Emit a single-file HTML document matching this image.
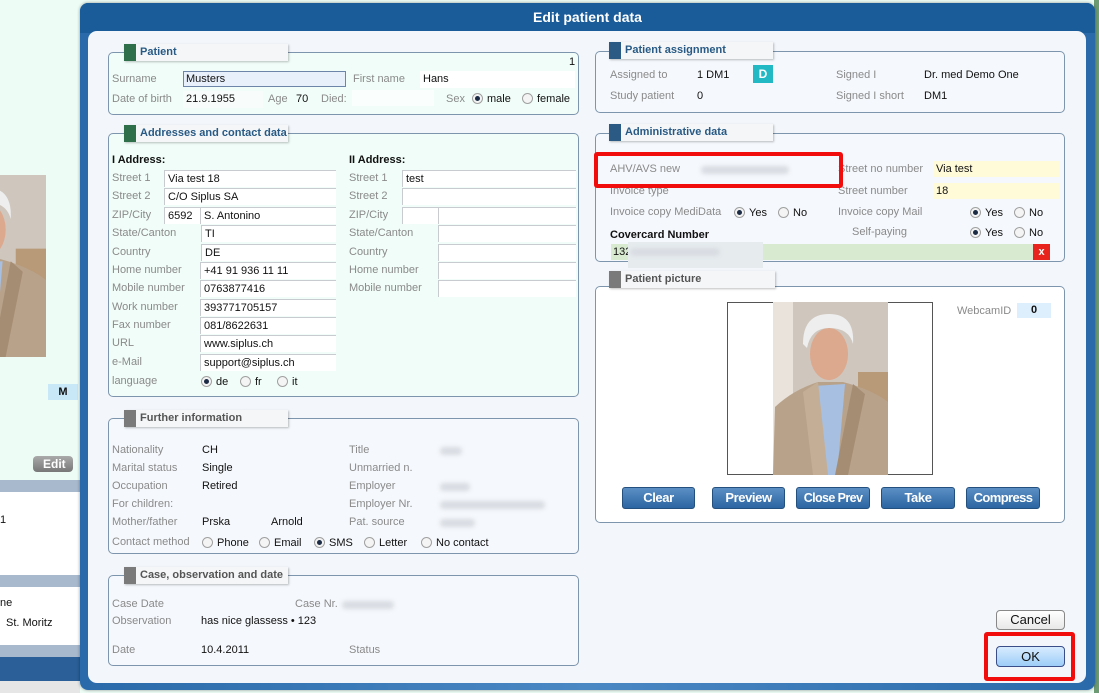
<!DOCTYPE html>
<html><head><meta charset="utf-8"><style>
*{box-sizing:border-box;margin:0;padding:0}
body{width:1099px;height:693px;overflow:hidden;background:#eefcf6;font-family:"Liberation Sans",sans-serif;font-size:11px;color:#111;position:relative}
.a{position:absolute;white-space:nowrap}
.l{position:absolute;color:#8a8a8a;white-space:nowrap;line-height:14px}
.v{position:absolute;color:#111;white-space:nowrap;line-height:14px}
.f{position:absolute;border-top:1px solid #c8ccd0;border-left:1px solid #c8ccd0;background:#fff;height:17px;padding-left:3px;line-height:16px;white-space:nowrap}
.grp{position:absolute;border:1px solid #7d95ad;border-radius:5px;background:#f1fdf8}
.grp.w{background:#f5f8fc}
.grp.wh{background:#fff}
.tab{position:absolute;height:17px;background:#f4f6f8;box-shadow:1px 1px 2px rgba(0,0,0,.25);font-weight:bold;font-size:11px;color:#285a85;line-height:17px;padding-left:16px}
.tab i{position:absolute;left:0;top:0;width:12px;height:17px}
.rd{display:inline-block;width:11px;height:11px;border:1px solid #a0a0a0;border-radius:50%;background:#f4f4f4;vertical-align:-2px;margin-right:4px;position:relative}
.rd.on::after{content:"";position:absolute;left:2px;top:2px;width:5px;height:5px;border-radius:50%;background:#1b2a45}
.btn{position:absolute;height:22px;border-radius:3px;background:linear-gradient(#5b8fc4,#2b65a2);border:1px solid #23507f;color:#fff;font-weight:bold;font-size:13px;letter-spacing:-0.4px;text-align:center;line-height:20px;box-shadow:0 0 0 1px #fff;overflow:hidden}
.blur{position:absolute;height:8px;border-radius:4px;background:#d8dce2;filter:blur(2px)}
</style></head><body>
<svg width="0" height="0" style="position:absolute"><defs>
<symbol id="ph" viewBox="0 0 115 173" preserveAspectRatio="none">
<rect width="115" height="173" fill="#cfc6bd"/><rect x="0" width="20" height="173" fill="#e9e3db"/>
<rect x="85" y="70" width="30" height="30" fill="#b89a78"/>
<path d="M0 173 L2 105 Q20 88 45 80 L70 80 Q100 88 115 100 L115 173Z" fill="#b9a28a"/>
<path d="M40 84 L72 82 L64 173 L48 173Z" fill="#a7bfe0"/>
<path d="M30 90 L45 80 L55 173 L40 173Z" fill="#c4ae95"/><path d="M80 82 L92 92 L75 173 L62 173Z" fill="#a58d74"/>
<ellipse cx="56" cy="52" rx="19" ry="26" fill="#dca88e"/>
<path d="M30 42 Q30 12 56 12 Q82 12 80 42 Q76 26 56 26 Q38 26 34 46Z" fill="#eeeeee"/>
</symbol></defs></svg>

<!-- background app -->
<div class="a" style="left:0;top:175px;width:46px;height:182px;overflow:hidden"><svg style="position:absolute;left:-70px;top:0" width="116" height="182"><use href="#ph"/></svg></div>
<div class="a" style="left:48px;top:384px;width:30px;height:16px;background:#c8e8f8;font-weight:bold;text-align:center;line-height:16px">M</div>
<div class="a" style="left:33px;top:456px;width:40px;height:16px;border-radius:4px;background:linear-gradient(#aaa,#777);color:#fff;font-weight:bold;font-size:12px;line-height:16px;padding-left:10px">Edit</div>
<div class="a" style="left:0;top:480px;width:80px;height:12px;background:#a9b9cd"></div>
<div class="a" style="left:0;top:492px;width:80px;height:83px;background:#fff"></div>
<div class="v" style="left:0;top:513px">1</div>
<div class="a" style="left:0;top:575px;width:80px;height:12px;background:#a9b9cd"></div>
<div class="a" style="left:0;top:587px;width:80px;height:58px;background:#fff"></div>
<div class="v" style="left:0;top:596px">ne</div><div class="v" style="left:6px;top:616px">St. Moritz</div>
<div class="a" style="left:0;top:645px;width:80px;height:12px;background:#a9b9cd"></div>
<div class="a" style="left:0;top:657px;width:80px;height:24px;background:#2a5f97"></div>
<div class="a" style="left:0;top:681px;width:80px;height:12px;background:#e6e6e6"></div>
<div class="a" style="left:1094px;top:0;width:5px;height:693px;background:#6d9a72"></div>

<!-- dialog -->
<div class="a" style="left:80px;top:3px;width:1015px;height:687px;border-radius:8px;background:linear-gradient(90deg,#2a6aaa,#4a88c4 50%,#2a6aaa);box-shadow:0 0 3px rgba(0,0,0,.4)"></div>
<div class="a" style="left:80px;top:3px;width:1015px;height:30px;border-radius:8px 8px 0 0;background:#195c99"></div>
<div class="a" style="left:80px;top:9px;width:1015px;text-align:center;color:#fff;font-weight:bold;font-size:14px">Edit patient data</div>
<div class="a" style="left:88px;top:31px;width:998px;height:652px;border-radius:9px;background:#f3f7fb"></div>

<!-- Patient -->
<div class="grp" style="left:108px;top:52px;width:471px;height:63px"></div>
<div class="tab" style="left:124px;top:44px;width:164px"><i style="background:#2f6f4a"></i>Patient</div>
<div class="v" style="left:569px;top:55px">1</div>
<div class="l" style="left:112px;top:72px">Surname</div>
<div class="a" style="left:183px;top:71px;width:163px;height:16px;border:1px solid #6c85a8;background:#e8f0fb;line-height:14px;padding-left:2px">Musters</div>
<div class="l" style="left:353px;top:72px">First name</div>
<div class="f" style="left:420px;top:71px;width:155px;border:0;background:#fff">Hans</div>
<div class="l" style="left:112px;top:92px">Date of birth</div>
<div class="f" style="left:183px;top:91px;width:80px;border:0;background:#f8fcfa">21.9.1955</div>
<div class="l" style="left:268px;top:92px">Age</div><div class="v" style="left:296px;top:92px">70</div>
<div class="l" style="left:321px;top:92px">Died:</div>
<div class="a" style="left:352px;top:90px;width:82px;height:16px;background:#fafefd"></div>
<div class="l" style="left:446px;top:92px">Sex</div>
<div class="v" style="left:472px;top:92px"><span class="rd on"></span>male</div>
<div class="v" style="left:522px;top:92px"><span class="rd"></span>female</div>

<!-- Addresses -->
<div class="grp" style="left:108px;top:133px;width:471px;height:264px"></div>
<div class="tab" style="left:124px;top:125px;width:164px"><i style="background:#2f6f4a"></i>Addresses and contact data</div>
<div class="v" style="left:112px;top:153px;font-weight:bold">I Address:</div>
<div class="v" style="left:349px;top:153px;font-weight:bold">II Address:</div>
<div class="l" style="left:112px;top:171px">Street 1</div><div class="f" style="left:164px;top:170px;width:172px">Via test 18</div>
<div class="l" style="left:112px;top:189px">Street 2</div><div class="f" style="left:164px;top:188px;width:172px">C/O Siplus SA</div>
<div class="l" style="left:112px;top:208px">ZIP/City</div><div class="f" style="left:164px;top:207px;width:36px">6592</div><div class="f" style="left:200px;top:207px;width:136px">S. Antonino</div>
<div class="l" style="left:112px;top:226px">State/Canton</div><div class="f" style="left:201px;top:225px;width:135px">TI</div>
<div class="l" style="left:112px;top:245px">Country</div><div class="f" style="left:201px;top:244px;width:135px">DE</div>
<div class="l" style="left:112px;top:263px">Home number</div><div class="f" style="left:200px;top:262px;width:136px">+41 91 936 11 11</div>
<div class="l" style="left:112px;top:281px">Mobile number</div><div class="f" style="left:200px;top:280px;width:136px">0763877416</div>
<div class="l" style="left:112px;top:300px">Work number</div><div class="f" style="left:200px;top:299px;width:136px">393771705157</div>
<div class="l" style="left:112px;top:318px">Fax number</div><div class="f" style="left:200px;top:317px;width:136px">081/8622631</div>
<div class="l" style="left:112px;top:336px">URL</div><div class="f" style="left:200px;top:335px;width:136px">www.siplus.ch</div>
<div class="l" style="left:112px;top:355px">e-Mail</div><div class="f" style="left:200px;top:354px;width:136px">support@siplus.ch</div>
<div class="l" style="left:112px;top:374px">language</div>
<div class="v" style="left:201px;top:375px"><span class="rd on"></span>de</div>
<div class="v" style="left:240px;top:375px"><span class="rd"></span>fr</div>
<div class="v" style="left:277px;top:375px"><span class="rd"></span>it</div>
<div class="l" style="left:349px;top:171px">Street 1</div><div class="f" style="left:402px;top:170px;width:174px">test</div>
<div class="l" style="left:349px;top:189px">Street 2</div><div class="f" style="left:402px;top:188px;width:174px"></div>
<div class="l" style="left:349px;top:208px">ZIP/City</div><div class="f" style="left:402px;top:207px;width:36px"></div><div class="f" style="left:438px;top:207px;width:138px"></div>
<div class="l" style="left:349px;top:226px">State/Canton</div><div class="f" style="left:438px;top:225px;width:138px"></div>
<div class="l" style="left:349px;top:245px">Country</div><div class="f" style="left:438px;top:244px;width:138px"></div>
<div class="l" style="left:349px;top:263px">Home number</div><div class="f" style="left:438px;top:262px;width:138px"></div>
<div class="l" style="left:349px;top:281px">Mobile number</div><div class="f" style="left:438px;top:280px;width:138px"></div>

<!-- Further info -->
<div class="grp w" style="left:108px;top:418px;width:471px;height:136px"></div>
<div class="tab" style="left:124px;top:410px;width:164px;color:#555"><i style="background:#7a7a7a"></i>Further information</div>
<div class="l" style="left:112px;top:443px">Nationality</div><div class="v" style="left:202px;top:443px">CH</div>
<div class="l" style="left:112px;top:461px">Marital status</div><div class="v" style="left:202px;top:461px">Single</div>
<div class="l" style="left:112px;top:479px">Occupation</div><div class="v" style="left:202px;top:479px">Retired</div>
<div class="l" style="left:112px;top:497px">For children:</div>
<div class="l" style="left:112px;top:515px">Mother/father</div><div class="v" style="left:202px;top:515px">Prska</div><div class="v" style="left:271px;top:515px">Arnold</div>
<div class="l" style="left:349px;top:443px">Title</div><div class="blur" style="left:440px;top:447px;width:22px"></div>
<div class="l" style="left:349px;top:461px">Unmarried n.</div>
<div class="l" style="left:349px;top:479px">Employer</div><div class="blur" style="left:440px;top:483px;width:30px"></div>
<div class="l" style="left:349px;top:497px">Employer Nr.</div><div class="blur" style="left:440px;top:501px;width:105px"></div>
<div class="l" style="left:349px;top:515px">Pat. source</div><div class="blur" style="left:440px;top:519px;width:35px"></div>
<div class="l" style="left:112px;top:535px">Contact method</div>
<div class="v" style="left:202px;top:536px"><span class="rd"></span>Phone</div>
<div class="v" style="left:259px;top:536px"><span class="rd"></span>Email</div>
<div class="v" style="left:314px;top:536px"><span class="rd on"></span>SMS</div>
<div class="v" style="left:364px;top:536px"><span class="rd"></span>Letter</div>
<div class="v" style="left:421px;top:536px"><span class="rd"></span>No contact</div>

<!-- Case -->
<div class="grp w" style="left:108px;top:575px;width:471px;height:91px"></div>
<div class="tab" style="left:124px;top:567px;width:164px;color:#555"><i style="background:#7a7a7a"></i>Case, observation and date</div>
<div class="l" style="left:112px;top:597px">Case Date</div>
<div class="l" style="left:295px;top:597px">Case Nr.</div><div class="blur" style="left:342px;top:601px;width:52px"></div>
<div class="l" style="left:112px;top:614px">Observation</div><div class="v" style="left:201px;top:614px">has nice glassess • 123</div>
<div class="l" style="left:112px;top:643px">Date</div><div class="v" style="left:201px;top:643px">10.4.2011</div>
<div class="l" style="left:349px;top:643px">Status</div>

<!-- Patient assignment -->
<div class="grp w" style="left:595px;top:51px;width:470px;height:62px"></div>
<div class="tab" style="left:609px;top:42px;width:164px"><i style="background:#2b5a85"></i>Patient assignment</div>
<div class="l" style="left:610px;top:68px">Assigned to</div><div class="v" style="left:697px;top:68px">1 DM1</div>
<div class="a" style="left:753px;top:65px;width:20px;height:18px;background:#22b8c4;color:#fff;font-weight:bold;font-size:12px;text-align:center;line-height:18px">D</div>
<div class="l" style="left:610px;top:89px">Study patient</div><div class="v" style="left:697px;top:89px">0</div>
<div class="l" style="left:836px;top:68px">Signed I</div><div class="v" style="left:924px;top:68px">Dr. med Demo One</div>
<div class="l" style="left:836px;top:89px">Signed I short</div><div class="v" style="left:924px;top:89px">DM1</div>

<!-- Admin -->
<div class="grp w" style="left:595px;top:133px;width:470px;height:129px"></div>
<div class="tab" style="left:609px;top:124px;width:164px"><i style="background:#2b5a85"></i>Administrative data</div>
<div class="l" style="left:610px;top:162px">AHV/AVS new</div><div class="blur" style="left:701px;top:166px;width:88px"></div>
<div class="l" style="left:610px;top:184px">Invoice type</div>
<div class="l" style="left:838px;top:162px">Street no number</div><div class="a" style="left:934px;top:161px;width:125px;height:16px;background:#fffbd8;padding-left:2px;line-height:16px">Via test</div>
<div class="l" style="left:838px;top:184px">Street number</div><div class="a" style="left:934px;top:183px;width:125px;height:16px;background:#fffbd8;padding-left:2px;line-height:16px">18</div>
<div class="l" style="left:610px;top:205px">Invoice copy MediData</div>
<div class="v" style="left:734px;top:206px"><span class="rd on"></span>Yes</div>
<div class="v" style="left:778px;top:206px"><span class="rd"></span>No</div>
<div class="l" style="left:838px;top:205px">Invoice copy Mail</div>
<div class="v" style="left:970px;top:206px"><span class="rd on"></span>Yes</div>
<div class="v" style="left:1014px;top:206px"><span class="rd"></span>No</div>
<div class="v" style="left:610px;top:228px;font-weight:bold">Covercard Number</div>
<div class="l" style="left:852px;top:225px">Self-paying</div>
<div class="v" style="left:970px;top:226px"><span class="rd on"></span>Yes</div>
<div class="v" style="left:1014px;top:226px"><span class="rd"></span>No</div>
<div class="a" style="left:611px;top:244px;width:438px;height:16px;background:#d8ead0;line-height:16px;padding-left:2px">132</div>
<div class="a" style="left:628px;top:242px;width:135px;height:26px;background:#e6ecee"></div>
<div class="blur" style="left:630px;top:248px;width:90px"></div>
<div class="a" style="left:1033px;top:244px;width:17px;height:16px;background:#e8221c;color:#fff;font-weight:bold;text-align:center;line-height:16px">x</div>
<div class="a" style="left:594px;top:152px;width:249px;height:36px;border:4px solid #f20d0d;border-radius:3px"></div>

<!-- Picture -->
<div class="grp wh" style="left:595px;top:286px;width:470px;height:237px"></div>
<div class="tab" style="left:609px;top:271px;width:166px;color:#555"><i style="background:#7a7a7a"></i>Patient picture</div>
<div class="a" style="left:727px;top:302px;width:206px;height:173px;border:1px solid #555;background:#fff"></div>
<svg class="a" style="left:773px;top:302px" width="115" height="173"><use href="#ph"/></svg>
<div class="l" style="left:957px;top:304px">WebcamID</div>
<div class="a" style="left:1017px;top:303px;width:34px;height:15px;background:#ddeffc;font-weight:bold;text-align:center;line-height:15px">0</div>
<div class="btn" style="left:622px;top:487px;width:73px">Clear</div>
<div class="btn" style="left:712px;top:487px;width:73px">Preview</div>
<div class="btn" style="left:796px;top:487px;width:74px;font-size:12.5px;letter-spacing:-0.6px">Close Prev</div>
<div class="btn" style="left:881px;top:487px;width:74px">Take</div>
<div class="btn" style="left:966px;top:487px;width:74px;letter-spacing:-0.6px">Compress</div>

<div class="a" style="left:996px;top:610px;width:69px;height:20px;border:1px solid #888;border-radius:4px;background:linear-gradient(#fff,#e8e8e8);text-align:center;line-height:18px;font-size:13px">Cancel</div>
<div class="a" style="left:984px;top:632px;width:91px;height:49px;border:4px solid #f20d0d;border-radius:3px"></div>
<div class="a" style="left:996px;top:646px;width:69px;height:21px;border:1px solid #3a4f8a;border-radius:4px;background:linear-gradient(#d8ecff,#9dcdf7);text-align:center;line-height:19px;font-size:13px">OK</div>
</body></html>
